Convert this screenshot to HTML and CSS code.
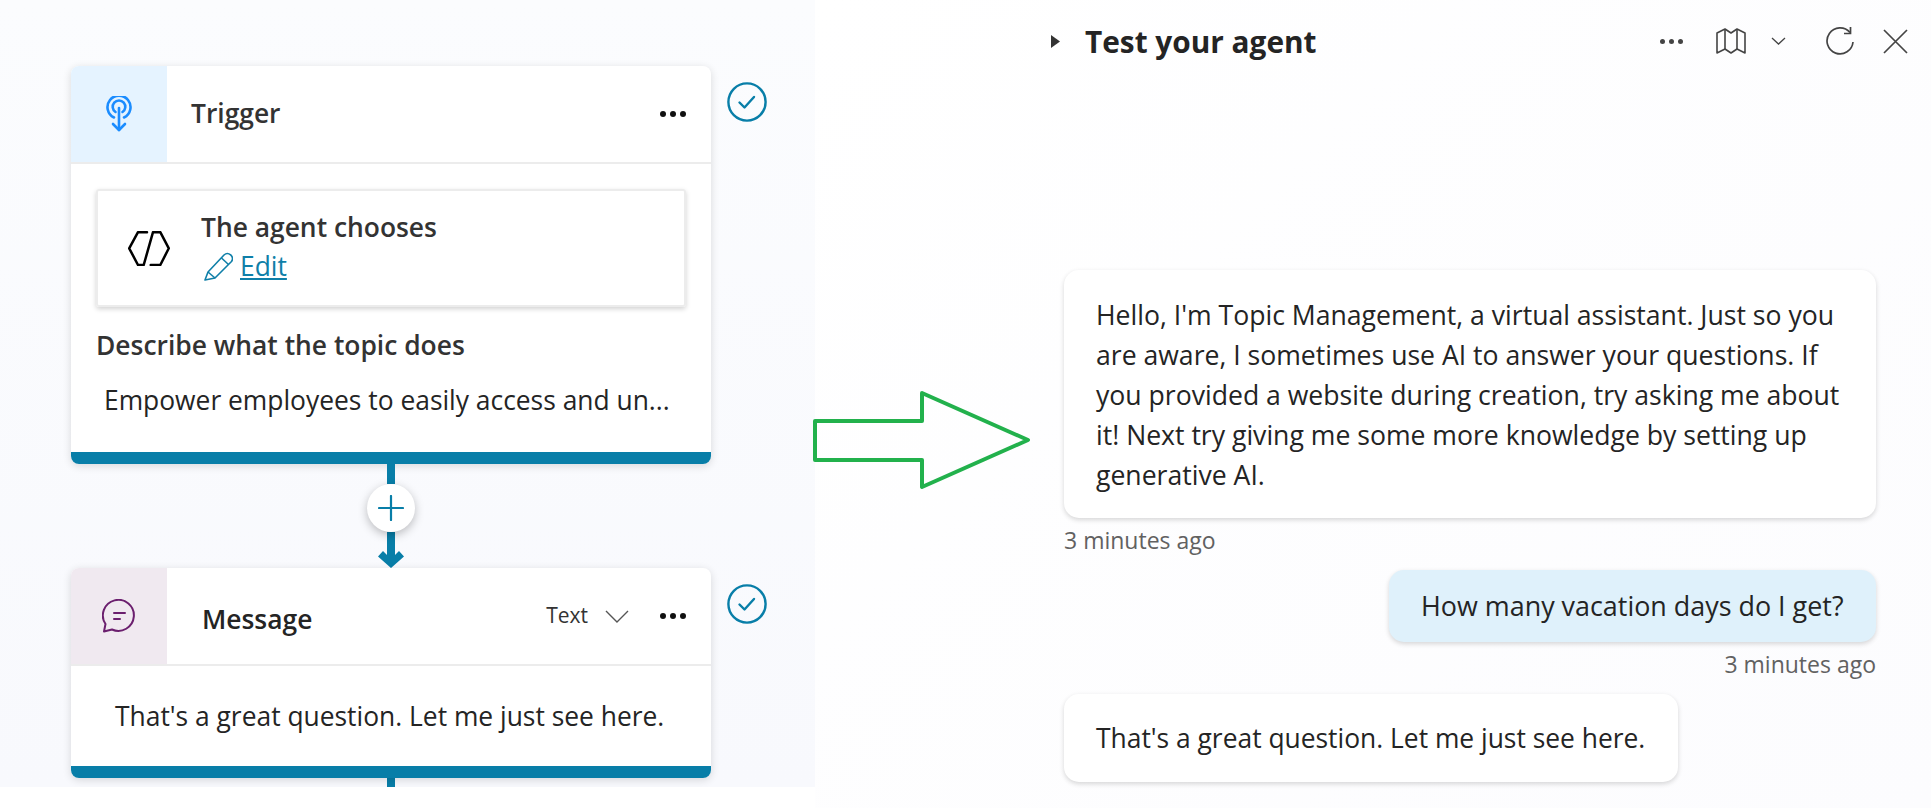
FILE: index.html
```html
<!DOCTYPE html>
<html lang="en">
<head>
    <meta charset="UTF-8">
    <meta name="viewport" content="width=device-width, initial-scale=1.0">
    <title>Test your agent</title>
    <link rel="stylesheet" href="styles.css">
</head>
<body>

    <div class="page">
        <div class="canvas">
            <div class="node-row">
                <div class="node">
                    <div class="node-header">
                        <div class="node-icon trigger-icon">
                            <svg width="26" height="36" viewBox="0 0 26 36" fill="none" stroke="#1b8cff" stroke-width="2.6" stroke-linecap="round" stroke-linejoin="round">
                                <path d="M8 21.5A11.5 11.5 0 1 1 18 21.5"/>
                                <path d="M9.5 16A6.3 6.3 0 1 1 16.5 16"/>
                                <path d="M13 12V34"/>
                                <path d="M7 28L13 34L19 28"/>
                            </svg>
                        </div>
                        <span class="node-title">Trigger</span>
                        <div class="dots"><i></i><i></i><i></i></div>
                    </div>
                    <div class="node-body trigger-body">
                        <div class="agent-box">
                            <svg class="agent-icon" width="42" height="35" viewBox="0 0 42 35" fill="none" stroke="#000" stroke-width="2.5" stroke-linecap="round" stroke-linejoin="round">
                                <path d="M19 1.2H10L1.2 17.3L10 34H15.7L25 1.2H32.3L40.8 17.3L32.3 34H22.7"/>
                            </svg>
                            <div>
                                <div class="agent-title">The agent chooses</div>
                                <div class="edit-row">
                                    <svg width="30" height="30" viewBox="0 0 30 30" fill="none" stroke="#0f7fa8" stroke-width="1.6" stroke-linejoin="round">
                                        <path d="M2 29L5 21L21 4A5 5 0 0 1 28.5 10.5L12 27Z"/>
                                        <path d="M18.5 7L25.5 13.5"/>
                                        <path d="M5 21L12 27"/>
                                    </svg>
                                    <a class="edit-link" href="#">Edit</a>
                                </div>
                            </div>
                        </div>
                        <div class="section-label">Describe what the topic does</div>
                        <div class="section-text">Empower employees to easily access and un...</div>
                    </div>
                    <div class="node-bar"></div>
                </div>
                <svg class="check" width="40" height="40" viewBox="0 0 40 40" fill="none" stroke="#087ea8" stroke-width="2.4" stroke-linecap="round" stroke-linejoin="round">
                    <circle cx="20" cy="20" r="18.6"/>
                    <path d="M12.5 20.5L17.5 25.5L27 15"/>
                </svg>
            </div>

            <div class="connector">
                <div class="line line-top"></div>
                <div class="add-btn">
                    <svg width="26" height="26" viewBox="0 0 26 26" stroke="#087ea8" stroke-width="2.2" stroke-linecap="round">
                        <path d="M13 1V25M1 13H25"/>
                    </svg>
                </div>
                <div class="line line-bottom"></div>
                <svg class="arrow-head" width="26" height="18" viewBox="0 0 26 18" fill="#087ea8">
                    <path d="M0 6.5L5 1L9 5V0H17V5L21 1L26 6.5L13 18Z"/>
                </svg>
            </div>

            <div class="node-row">
                <div class="node">
                    <div class="node-header">
                        <div class="node-icon message-icon">
                            <svg width="34" height="34" viewBox="0 0 34 34" fill="none" stroke="#6b1f6e" stroke-width="2" stroke-linecap="round" stroke-linejoin="round">
                                <path d="M3.5 25A15.5 15.5 0 1 1 10 30.5L2 32.5Z"/>
                                <path d="M12 14H23M12 20H18"/>
                            </svg>
                        </div>
                        <span class="node-title message-title">Message</span>
                        <span class="type-select">Text</span>
                        <svg class="type-chevron" width="24" height="13" viewBox="0 0 24 13" fill="none" stroke="#555" stroke-width="1.4">
                            <path d="M1 1L12 12L23 1"/>
                        </svg>
                        <div class="dots"><i></i><i></i><i></i></div>
                    </div>
                    <div class="node-body message-body">That's a great question. Let me just see here.</div>
                    <div class="node-bar"></div>
                </div>
                <svg class="check" width="40" height="40" viewBox="0 0 40 40" fill="none" stroke="#087ea8" stroke-width="2.4" stroke-linecap="round" stroke-linejoin="round">
                    <circle cx="20" cy="20" r="18.6"/>
                    <path d="M12.5 20.5L17.5 25.5L27 15"/>
                </svg>
            </div>
            <div class="line line-tail"></div>
        </div>

        <div class="panel">
            <div class="panel-header">
                <svg class="caret" width="9" height="13" viewBox="0 0 9 13" fill="#333"><path d="M0 0L9 6.5L0 13Z"/></svg>
                <h1 class="panel-title">Test your agent</h1>
                <div class="dots small-dots"><i></i><i></i><i></i></div>
                <svg class="map-icon" width="30" height="26" viewBox="0 0 30 26" fill="none" stroke="#444" stroke-width="1.6" stroke-linejoin="round">
                    <path d="M1 5L9 1L15 5L21 1L29 5V25L21 21L15 25L9 21L1 25Z"/>
                    <path d="M9 1V21M21 1V21"/>
                </svg>
                <svg class="small-chevron" width="15" height="8" viewBox="0 0 15 8" fill="none" stroke="#444" stroke-width="1.3"><path d="M1 1L7.5 7L14 1"/></svg>
                <svg class="refresh-icon" width="30" height="29" viewBox="0 0 30 29" fill="none" stroke="#444" stroke-width="1.7">
                    <path d="M25 5.5A13 13 0 1 0 28 15"/>
                    <path d="M25.5 0V6.5H19"/>
                </svg>
                <svg class="close-icon" width="25" height="25" viewBox="0 0 25 25" stroke="#444" stroke-width="1.7"><path d="M1 1L24 24M24 1L1 24"/></svg>
            </div>

            <div class="messages">
                <div class="bubble bot-bubble">Hello, I'm Topic Management, a virtual assistant. Just so you are aware, I sometimes use AI to answer your questions. If you provided a website during creation, try asking me about it! Next try giving me some more knowledge by setting up generative AI.</div>
                <div class="timestamp">3 minutes ago</div>
                <div class="bubble user-bubble">How many vacation days do I get?</div>
                <div class="timestamp user-time">3 minutes ago</div>
                <div class="bubble bot-bubble short-bubble">That's a great question. Let me just see here.</div>
            </div>
        </div>

        <svg class="green-arrow" width="232" height="106" viewBox="0 0 232 106" fill="none" stroke="#22b14c" stroke-width="4" stroke-linejoin="round">
            <path d="M3 31H110V3L216 50L110 97V70H3Z"/>
        </svg>
    </div>

</body>
</html>
```

FILE: styles.css
```css
body {
    margin: 0;
    font-family: "Open Sans", "Noto Sans", sans-serif;
    background-color: #fff;
    color: #242424;
    overflow: hidden;
}

.page {
    position: relative;
    display: flex;
    height: 808px;
}

/* left: the topic canvas */
.canvas {
    width: 815px;
    height: 787px;
    box-sizing: border-box;
    padding: 66px 0 0 71px;
    background: linear-gradient(180deg, #fbfcfe 0%, #f8f9fd 100%);
    overflow: hidden;
}

.node-row {
    display: flex;
    align-items: flex-start;
    gap: 16px;
}

.node {
    width: 640px;
    background-color: #fff;
    border-radius: 8px;
    box-shadow: 0 2px 8px rgba(0, 0, 0, 0.14);
    overflow: hidden;
}

.check {
    margin-top: 16px;
}

.node-header {
    display: flex;
    align-items: center;
    height: 96px;
    border-bottom: 2px solid #ececec;
}

.node-icon {
    display: flex;
    align-items: center;
    justify-content: center;
    width: 96px;
    height: 96px;
    margin-bottom: -2px;
    align-self: flex-start;
}

.trigger-icon {
    background-color: #e5f3ff;
}

.message-icon {
    background-color: #f0e9f0;
}

.node-title {
    margin-left: 24px;
    margin-bottom: 3px;
    font-size: 26.4px;
    font-weight: 600;
    color: #333;
}

.message-title {
    margin-left: 35px;
    margin-bottom: 0;
    padding-top: 6px;
    color: #242424;
}

.type-select {
    margin-left: auto;
    margin-bottom: 2px;
    font-size: 21px;
    color: #333;
}

.type-chevron {
    margin-left: 17px;
}

.dots {
    display: flex;
    gap: 4px;
    margin-left: auto;
    margin-right: 25px;
}

.type-chevron + .dots {
    margin-left: 31px;
}

.dots i {
    width: 6px;
    height: 6px;
    border-radius: 50%;
    background-color: #111;
}

.trigger-body {
    height: 288px;
    box-sizing: border-box;
    padding: 25px 25px 0;
}

.agent-box {
    display: flex;
    align-items: center;
    height: 118px;
    box-sizing: border-box;
    padding-left: 30px;
    border: 2px solid #ececec;
    border-radius: 3px;
    box-shadow: 0 2px 5px rgba(0, 0, 0, 0.18);
}

.agent-icon {
    margin-right: 31px;
}

.agent-title {
    font-size: 26.4px;
    font-weight: 600;
    line-height: 36px;
    margin-top: -5px;
    color: #333;
}

.edit-row {
    display: flex;
    align-items: center;
    gap: 7px;
    margin: 5px 0 0 2px;
}

.edit-link {
    font-size: 26.4px;
    line-height: 32px;
    color: #0f7fa8;
}

.section-label {
    margin-top: 18px;
    font-size: 26.4px;
    font-weight: 600;
    line-height: 40px;
    color: #333;
}

.section-text {
    margin: 15px 0 0 8px;
    font-size: 26.4px;
    line-height: 40px;
    white-space: nowrap;
}

.node-bar {
    height: 12px;
    background-color: #087ea8;
}

.message-body {
    height: 100px;
    display: flex;
    align-items: center;
    padding-left: 44px;
    font-size: 26.4px;
}

/* connector between the nodes */
.connector {
    display: flex;
    flex-direction: column;
    align-items: center;
    width: 640px;
    height: 104px;
}

.line {
    width: 8px;
    background-color: #087ea8;
}

.line-top {
    height: 20px;
}

.line-bottom {
    height: 20px;
}

.line-tail {
    height: 9px;
    margin-left: 316px;
}

.add-btn {
    display: flex;
    align-items: center;
    justify-content: center;
    width: 48px;
    height: 48px;
    border-radius: 50%;
    background-color: #fff;
    box-shadow: 0 3px 10px rgba(0, 0, 0, 0.25);
    position: relative;
}

.arrow-head {
    margin-top: -2px;
}

/* right: the test panel */
.panel {
    flex: 1;
    background: linear-gradient(135deg, #fff 0%, #fcfcfe 100%);
}

.panel-header {
    display: flex;
    align-items: center;
    height: 82px;
    padding: 0 23px 0 236px;
}

.caret {
    margin-right: 25px;
}

.panel-title {
    margin: 0;
    font-size: 29.8px;
    font-weight: 700;
    color: #242424;
}

.small-dots {
    gap: 4px;
    margin-right: 33px;
}

.small-dots i {
    width: 5px;
    height: 5px;
    background-color: #444;
}

.small-chevron {
    margin-left: 25px;
}

.refresh-icon {
    margin-left: 39px;
}

.close-icon {
    margin-left: 28px;
}

.messages {
    display: flex;
    flex-direction: column;
    align-items: flex-start;
    margin: 188px 55px 0 249px;
}

.bubble {
    box-sizing: border-box;
    border-radius: 15px;
    background-color: #fff;
    box-shadow: 0 2px 5px rgba(0, 0, 0, 0.16);
    padding: 25px 32px 23px;
    font-size: 26.6px;
    line-height: 40px;
}

.bot-bubble {
    width: 812px;
}

.short-bubble {
    width: 614px;
    padding: 24px 32px;
    font-size: 26.4px;
    white-space: nowrap;
}

.user-bubble {
    align-self: flex-end;
    width: 487px;
    padding: 16px 32px;
    font-size: 26.9px;
    white-space: nowrap;
    background-color: #dff1fb;
}

.timestamp {
    margin: 8px 0 16px;
    font-size: 23px;
    line-height: 28px;
    color: #616161;
}

.user-time {
    align-self: flex-end;
    margin: 8px 0 16px;
}

/* annotation drawn over the screenshot */
.green-arrow {
    position: absolute;
    left: 812px;
    top: 390px;
}
```
